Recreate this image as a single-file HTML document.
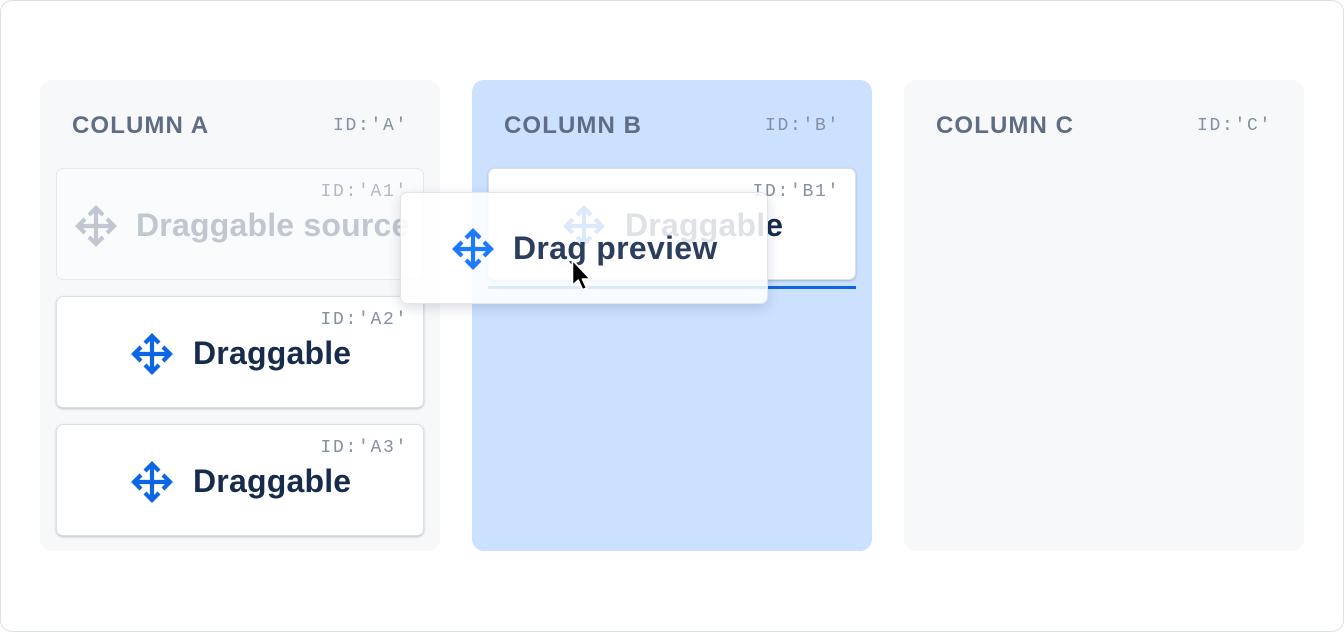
<!DOCTYPE html>
<html><head><style>
*{box-sizing:border-box;margin:0;padding:0}
body{width:1344px;height:632px;background:#fff;font-family:"Liberation Sans",sans-serif;position:relative;overflow:hidden}
.frame{position:absolute;left:0;top:0;width:1344px;height:632px;border:1px solid #dcdfe4;border-radius:12px}
.col{position:absolute;top:80px;width:400px;height:471px;background:#f7f8f9;border-radius:12px}
.col h2{position:absolute;left:32px;top:32px;font-size:24px;font-weight:bold;color:#5e6c84;letter-spacing:1.1px}
.col .id{position:absolute;right:32px;top:36px;font-family:"Liberation Mono",monospace;font-size:18px;letter-spacing:1.7px;color:#8590a2}
.card{position:absolute;left:16px;width:368px;height:112px;background:#fff;border:1px solid #dcdfe4;border-radius:7px;box-shadow:0 1px 2px rgba(9,30,66,.25)}
.card .cid{position:absolute;right:15px;top:13px;font-family:"Liberation Mono",monospace;font-size:18px;letter-spacing:1.7px;color:#8590a2}
.card .lab{position:absolute;top:38px;font-size:32px;font-weight:bold;color:#172b4d;letter-spacing:.2px}
.card svg{position:absolute;top:33px}
</style></head><body>
<div class="frame"></div>
<svg width="0" height="0" style="position:absolute"><defs>
<g id="mv" fill="none" stroke="currentColor" stroke-width="4.2" stroke-linecap="butt" stroke-linejoin="miter"><path d="M24 6V42M6 24H42M17 13L24 6L31 13M17 35L24 42L31 35M13 17L6 24L13 31M35 17L42 24L35 31"/></g>
</defs></svg>

<div class="col" style="left:40px">
<h2>COLUMN A</h2><div class="id">ID:'A'</div>
<div class="card" style="top:88px;background:#fafbfc;box-shadow:none;border-color:#e6e8ec">
<div class="cid" style="color:#b3b9c4">ID:'A1'</div>
<svg width="48" height="48" style="left:15px;color:#c1c7d0"><use href="#mv"/></svg>
<div class="lab" style="left:79px;color:#c1c7d0">Draggable source</div></div>
<div class="card" style="top:216px"><div class="cid">ID:'A2'</div>
<svg width="48" height="48" style="left:71px;color:#0c66e4"><use href="#mv"/></svg>
<div class="lab" style="left:136px">Draggable</div></div>
<div class="card" style="top:344px"><div class="cid">ID:'A3'</div>
<svg width="48" height="48" style="left:71px;color:#0c66e4"><use href="#mv"/></svg>
<div class="lab" style="left:136px">Draggable</div></div>
</div>

<div class="col" style="left:472px;background:#cce0ff">
<h2>COLUMN B</h2><div class="id">ID:'B'</div>
<div class="card" style="top:88px"><div class="cid">ID:'B1'</div>
<svg width="48" height="48" style="left:71px;color:#0c66e4"><use href="#mv"/></svg>
<div class="lab" style="left:136px">Draggable</div></div>
<div style="position:absolute;left:16px;top:206px;width:368px;height:3px;background:#0c66e4"></div>
</div>

<div class="col" style="left:904px">
<h2>COLUMN C</h2><div class="id">ID:'C'</div>
</div>

<div style="position:absolute;left:400px;top:192px;width:368px;height:112px;background:rgba(255,255,255,.86);border:1px solid rgba(220,223,228,.8);border-radius:7px;box-shadow:0 4px 12px rgba(9,30,66,.15)">
<svg width="48" height="48" style="position:absolute;left:48px;top:32px;color:#1d7afc"><use href="#mv"/></svg>
<div style="position:absolute;left:112px;top:37px;font-size:32px;font-weight:bold;color:#2c3e5d;letter-spacing:.3px">Drag preview</div>
</div>

<svg width="26" height="36" style="position:absolute;left:570px;top:259px" viewBox="0 0 24 34">
<path d="M2 1V25L7.5 20L11.5 29L15.5 27.5L11.5 19H19Z" fill="#000" stroke="#fff" stroke-width="1.6" stroke-linejoin="round"/>
</svg>
</body></html>
